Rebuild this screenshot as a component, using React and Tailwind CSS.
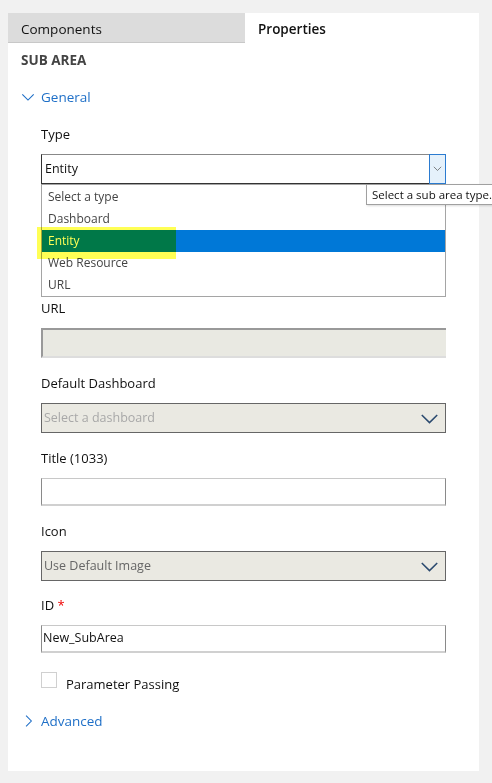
import React from 'react';

const font = { fontFamily: '"Open Sans", "Noto Sans", sans-serif' };

function Chevron({ className = '', dir = 'down' }) {
  return (
    <svg viewBox="0 0 16 16" className={className} fill="none" stroke="currentColor" strokeWidth="1.3">
      {dir === 'down' ? <path d="M1.5 5 L8 11.5 L14.5 5" /> : <path d="M5 1.5 L11.5 8 L5 14.5" />}
    </svg>
  );
}

function Label({ children }) {
  return <div className="text-[13px] text-[#111] leading-[20px] mb-[10px]">{children}</div>;
}

function GreySelect({ text, muted }) {
  return (
    <div className="h-[30px] w-[405px] border border-[#666] bg-[#eae9e2] flex items-center justify-between pl-[2px] pr-[6px]">
      <span className={`text-[12.5px] ${muted ? 'text-[#a8a8a8]' : 'text-[#666]'}`}>{text}</span>
      <Chevron className="w-[19px] h-[19px] text-[#2b4a6f]" />
    </div>
  );
}

export default function App() {
  const options = ['Select a type', 'Dashboard', 'Entity', 'Web Resource', 'URL'];

  return (
    <div className="w-[492px] h-[783px] bg-[#f1f1f1] pt-[13px] pl-[8px] overflow-hidden" style={font}>
      <div className="w-[471px] h-[758px] bg-white relative">
        {/* tabs */}
        <div className="flex h-[30px]">
          <div className="w-[237px] bg-[#dcdcdc] border-b border-[#c8c8c8] text-[13.5px] text-[#111] pl-[13px] pt-[3px] flex items-center">Components</div>
          <div className="flex-1 bg-white text-[13.5px] font-semibold text-[#111] pl-[13px] pt-[3px] flex items-center">Properties</div>
        </div>

        <div className="pl-[13px] pt-[7px] text-[13.5px] font-bold text-[#444] leading-[20px]">SUB AREA</div>

        <div className="flex items-center gap-[6px] pl-[13px] mt-[17px] text-[#1e6fc7] text-[13.5px] leading-[20px]">
          <Chevron className="w-[14px] h-[14px]" />
          <span>General</span>
        </div>

        <div className="pl-[33px] mt-[17px]">
          <Label>Type</Label>
          <div className="relative w-[405px]">
            <div className="h-[30px] border border-[#333] border-t-[#888] flex items-center justify-between bg-white">
              <span className="text-[12.5px] text-[#111] pl-[3px]">Entity</span>
              <div className="h-[30px] w-[17px] -mr-px -mt-px border border-[#2b7bd0] bg-[#e5f1fb] flex items-center justify-center">
                <Chevron className="w-[9px] h-[9px] text-[#555]" />
              </div>
            </div>
            <div className="border border-[#a5a5a5] bg-white pt-px">
              {options.map((o) => (
                <div
                  key={o}
                  className={`h-[22px] pl-[6px] flex items-center text-[12px] ${o === 'Entity' ? 'bg-[#0078d7] text-white' : 'text-[#444]'}`}
                >
                  {o}
                </div>
              ))}
            </div>
            {/* highlighter mark */}
            <div className="absolute left-[-4px] top-[73px] w-[139px] h-[32px] bg-[#ffff55] mix-blend-multiply" />
            {/* tooltip */}
            <div className="absolute left-[325px] top-[30px] h-[21px] w-[140px] border border-[#a0a0a0] bg-white text-[11.5px] text-[#111] pl-[5px] flex items-center whitespace-nowrap shadow-[1px_1px_2px_rgba(0,0,0,0.15)]">
              Select a sub area type.
            </div>
          </div>

          <div className="mt-px">
            <Label>URL</Label>
            <div className="h-[30px] w-[405px] bg-[#e9e9e2] border-t-[2px] border-l-[2px] border-[#999] border-b-[2px] border-b-[#ddd]" />
          </div>

          <div className="mt-[15px]">
            <Label>Default Dashboard</Label>
            <GreySelect text="Select a dashboard" muted />
          </div>

          <div className="mt-[15px]">
            <Label>Title (1033)</Label>
            <div className="h-[28px] w-[405px] border border-[#8a8a8a] border-t-[#c8c8c8] border-b-[2px] border-b-[#d0d0d0]" />
          </div>

          <div className="mt-[15px]">
            <Label>Icon</Label>
            <GreySelect text="Use Default Image" />
          </div>

          <div className="mt-[14px]">
            <Label>
              ID <span className="text-[#e00]">*</span>
            </Label>
            <div className="h-[28px] w-[405px] border border-[#8a8a8a] border-t-[#c8c8c8] border-b-[2px] border-b-[#d0d0d0] flex items-center pl-[1px] text-[12.5px] text-[#111]">
              New_SubArea
            </div>
          </div>

          <div className="mt-[21px] flex items-center gap-[9px] h-[20px]">
            <div className="w-[16px] h-[16px] border border-[#d0d0d0] bg-white -mt-[8px]" />
            <span className="text-[13px] text-[#111] leading-[20px]">Parameter Passing</span>
          </div>
        </div>

        <div className="flex items-center gap-[6px] pl-[14px] mt-[17px] text-[#1e6fc7] text-[13.5px] leading-[20px]">
          <Chevron dir="right" className="w-[13px] h-[14px]" />
          <span>Advanced</span>
        </div>
      </div>
    </div>
  );
}
